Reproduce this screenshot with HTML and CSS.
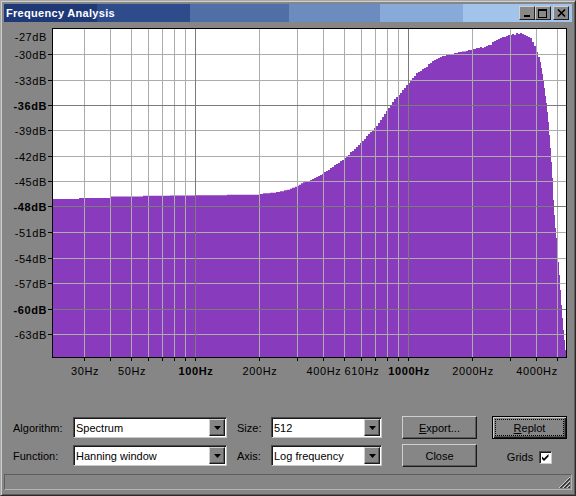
FILE: index.html
```html
<!DOCTYPE html>
<html lang="en">
<head>
  <meta charset="UTF-8" />
  <title>Frequency Analysis</title>
  <link rel="stylesheet" href="styles.css">
</head>
<body>
  <div class="window">
    <!-- Barra de título -->
    <div class="titlebar">
      <span class="title">Frequency Analysis</span>
      <div class="caption-buttons">
        <span class="cap-btn"><svg width="14" height="12" viewBox="0 0 14 12"><rect x="4" y="8" width="6" height="2" fill="#000"/></svg></span>
        <span class="cap-btn"><svg width="14" height="12" viewBox="0 0 14 12"><path d="M2 2h9v9H2zM3 4h7v6H3z" fill="#000" fill-rule="evenodd"/></svg></span>
        <span class="cap-btn cap-close"><svg width="14" height="12" viewBox="0 0 14 12"><path d="M4 2.5L11 9.5M11 2.5L4 9.5" stroke="#000" stroke-width="1.7"/></svg></span>
      </div>
    </div>

    <!-- Gráfico del espectro -->
    <svg class="plot" width="568" height="394" viewBox="4 22 568 394">
      <rect x="52" y="28" width="515" height="330" fill="#fff"/>
      <path class="spectrum" d="M53,357 V199 H79 V198 H110 V196.5 H143 V195.7 H170 V195.4 H195 V195.3 H227 V194.7 H259 V194 H263 V193.3 H270 V192.7 H276 V192 H280 V191.3 H284 V190.3 H287 V189.7 H290 V188.7 H292 V187.7 H295 V186.7 H297 V185.7 H299 V184.7 H301 V183.3 H303 V182.3 H305 V181.3 H307 V181 H310 V180 H312 V179 H314 V178 H316 V177 H318 V176 H320 V175 H322 V174 H324 V172 H326 V171 H328 V170 H330 V168 H332 V167 H334 V165 H336 V164 H338 V163 H340 V161 H342 V160 H344 V158 H346 V156 H348 V155 H350 V152 H352 V151 H354 V149 H356 V147 H358 V145 H360 V143 H362 V141 H364 V139 H366 V136 H368 V134 H370 V132 H372 V130 H374 V128 H376 V126 H378 V123 H380 V120 H382 V117 H384 V114 H386 V111 H388 V108 H390 V105 H392 V102 H394 V99 H396 V97 H398 V95 H400 V93 H402 V90 H404 V88 H406 V85 H408 V83 H410 V80 H412 V78 H414 V76 H416 V73 H418 V72 H420 V71 H422 V69 H424 V68 H426 V67 H428 V64 H430 V63 H432 V61 H434 V60 H436 V59 H438 V58 H440 V57 H442 V56 H446 V55 H452 V54 H454 V53 H458 V52 H462 V51.5 H466 V51 H468 V50 H472 V49 H476 V48 H480 V47 H482 V48 H484 V47 H486 V46 H488 V45 H492 V42 H494 V41 H496 V40 H498 V39 H500 V38 H502 V37 H506 V36 H508 V35 H512 V34 H514 V35 H516 V33 H518 V34 H520 V33 H522 V34 H524 V35 H526 V36 H528 V37 H530 V38 H532 V42 H534 V46 H536 V52 H538 V57 H540 V62 H541 V68 H542 V74 H543 V80 H544 V88 H545 V96 H546 V103 H547 V112 H548 V122 H549 V135 H550 V148 H551 V162 H552 V178 H553 V200 H554 V215 H555 V228 H556 V238 H557 V250 H558 V262 H559 V275 H560 V290 H561 V305 H562 V318 H563 V330 H564 V340 H565 V350 H566 V357 Z"/>
      <path class="grid" d="M84.5 29V357M110.5 29V357M131.5 29V357M148.5 29V357M162.5 29V357M174.5 29V357M185.5 29V357M259.5 29V357M297.5 29V357M323.5 29V357M344.5 29V357M361.5 29V357M375.5 29V357M387.5 29V357M398.5 29V357M472.5 29V357M510.5 29V357M536.5 29V357M557.5 29V357M53 54.5H566M53 80.5H566M53 130.5H566M53 156.5H566M53 181.5H566M53 232.5H566M53 258.5H566M53 283.5H566M53 334.5H566"/>
      <path class="grid-major" d="M195.5 29V357M408.5 29V357M53 105.5H566M53 206.5H566M53 309.5H566"/>
      <path class="frame" d="M52.5 28V358M52 28.5H567M566.5 28V357M52 357.5H567"/>
      <path class="frame" d="M48 54.5H52M48 80.5H52M48 105.5H52M48 130.5H52M48 156.5H52M48 181.5H52M48 206.5H52M48 232.5H52M48 258.5H52M48 283.5H52M48 309.5H52M48 334.5H52"/>
      <path class="frame" d="M84.5 358V361M110.5 358V361M131.5 358V361M148.5 358V361M162.5 358V361M174.5 358V361M185.5 358V361M195.5 358V361M259.5 358V361M297.5 358V361M323.5 358V361M344.5 358V361M361.5 358V361M375.5 358V361M387.5 358V361M398.5 358V361M408.5 358V361M472.5 358V361M510.5 358V361M536.5 358V361M557.5 358V361"/>

      <g class="axis-label" text-anchor="end">
        <text x="47" y="41">-27dB</text>
        <text x="47" y="59">-30dB</text>
        <text x="47" y="85">-33dB</text>
        <text x="47" y="110" class="major">-36dB</text>
        <text x="47" y="135">-39dB</text>
        <text x="47" y="161">-42dB</text>
        <text x="47" y="186">-45dB</text>
        <text x="47" y="211" class="major">-48dB</text>
        <text x="47" y="237">-51dB</text>
        <text x="47" y="263">-54dB</text>
        <text x="47" y="288">-57dB</text>
        <text x="47" y="314" class="major">-60dB</text>
        <text x="47" y="339">-63dB</text>
      </g>
      <g class="axis-label" text-anchor="middle">
        <text x="85" y="375">30Hz</text>
        <text x="132" y="375">50Hz</text>
        <text x="196" y="375" class="major">100Hz</text>
        <text x="260" y="375">200Hz</text>
        <text x="324" y="375">400Hz</text>
        <text x="362" y="375">610Hz</text>
        <text x="409" y="375" class="major">1000Hz</text>
        <text x="473" y="375">2000Hz</text>
        <text x="537" y="375">4000Hz</text>
      </g>
    </svg>

    <!-- Controles -->
    <div class="controls">
      <span class="lbl">Algorithm:</span>
      <div class="combo">
        <span class="combo-text">Spectrum</span>
        <span class="combo-arrow"><svg width="7" height="4" viewBox="0 0 7 4"><path d="M0 0h7L3.5 4z" fill="#000"/></svg></span>
      </div>
      <span class="lbl lbl-2">Size:</span>
      <div class="combo">
        <span class="combo-text">512</span>
        <span class="combo-arrow"><svg width="7" height="4" viewBox="0 0 7 4"><path d="M0 0h7L3.5 4z" fill="#000"/></svg></span>
      </div>
      <button class="btn"><u>E</u>xport...</button>
      <button class="btn btn-default"><span class="focus"><u>R</u>eplot</span></button>

      <span class="lbl">Function:</span>
      <div class="combo">
        <span class="combo-text">Hanning window</span>
        <span class="combo-arrow"><svg width="7" height="4" viewBox="0 0 7 4"><path d="M0 0h7L3.5 4z" fill="#000"/></svg></span>
      </div>
      <span class="lbl lbl-2">Axis:</span>
      <div class="combo">
        <span class="combo-text">Log frequency</span>
        <span class="combo-arrow"><svg width="7" height="4" viewBox="0 0 7 4"><path d="M0 0h7L3.5 4z" fill="#000"/></svg></span>
      </div>
      <button class="btn">Close</button>
      <div class="grids">
        <span>Grids</span>
        <span class="check"><svg width="11" height="11" viewBox="0 0 11 11"><path d="M2 4.5L4 6.5L8.5 2V4.5L4 9L2 7Z" fill="#000"/></svg></span>
      </div>
    </div>

    <!-- Barra de estado -->
    <div class="statusbar">
      <svg class="grip" width="13" height="13" viewBox="0 0 13 13">
        <path d="M12 1L1 12M12 5L5 12M12 9L9 12" stroke="#cfcfcf" stroke-width="1"/>
        <path d="M12 2L2 12M12 3L3 12M12 6L6 12M12 7L7 12M12 10L10 12M12 11L11 12" stroke="#3a3a3a" stroke-width="1"/>
      </svg>
    </div>
  </div>
</body>
</html>
```

FILE: styles.css
```css
html, body {
  margin: 0;
  padding: 0;
  background: #868686;
}
/* Ventana */
.window {
  width: 576px;
  height: 496px;
  box-sizing: border-box;
  display: flex;
  flex-direction: column;
  background: #868686;
  border: 1px solid;
  border-color: #a8a8a8 #2a2a2a #2a2a2a #a8a8a8;
  box-shadow: inset 1px 1px 0 #cfcfcf, inset -1px -1px 0 #5c5c5c;
  padding: 3px 3px 5px;
  font-family: "Liberation Sans", Arial, sans-serif;
  font-size: 11px;
  color: #000;
}
/* Barra de título */
.titlebar {
  height: 18px;
  flex: none;
  display: flex;
  align-items: center;
  justify-content: space-between;
  padding: 0 3px 0 2px;
  background: linear-gradient(to right,
    #1e3878 0 93px, #2e4c8c 93px 186px, #4f6fa6 186px 285px,
    #6c8cc0 285px 376px, #88aad8 376px 459px, #a2c4ea 459px);
}
.title {
  color: #fff;
  font-weight: bold;
  letter-spacing: 0.3px;
  line-height: 18px;
}
.caption-buttons {
  display: flex;
}
.cap-btn {
  width: 16px;
  height: 14px;
  box-sizing: border-box;
  display: flex;
  background: #888;
  border: 1px solid;
  border-color: #d0d0d0 #202020 #202020 #d0d0d0;
}
.cap-close {
  margin-left: 2px;
}
/* Gráfico */
.plot {
  display: block;
  flex: none;
}
.spectrum {
  fill: #893bbe;
}
.grid {
  fill: none;
  stroke: #acacac;
  stroke-width: 1;
}
.grid-major {
  fill: none;
  stroke: #7b7b7b;
  stroke-width: 1;
}
.frame {
  fill: none;
  stroke: #000;
  stroke-width: 1;
}
.axis-label {
  font-family: "Liberation Sans", Arial, sans-serif;
  font-size: 11px;
  letter-spacing: 0.6px;
  fill: #000;
}
.axis-label .major {
  font-weight: bold;
}
/* Controles */
.controls {
  flex: none;
  display: grid;
  grid-template-columns: 60px 154px 44px 111px 95px 90px;
  grid-template-rows: 23px 23px;
  row-gap: 5px;
  align-items: center;
  padding-left: 9px;
}
.lbl-2 {
  padding-left: 10px;
}
.combo {
  height: 21px;
  box-sizing: border-box;
  display: flex;
  align-items: center;
  background: #fff;
  border: 1px solid;
  border-color: #4a4a4a #c8c8c8 #c8c8c8 #4a4a4a;
  box-shadow: inset 1px 1px 0 #1a1a1a;
  padding-left: 2px;
}
.combo-text {
  flex: 1;
  white-space: nowrap;
}
.combo-arrow {
  width: 16px;
  height: 17px;
  box-sizing: border-box;
  margin-right: 1px;
  display: flex;
  align-items: center;
  justify-content: center;
  background: #868686;
  border: 1px solid;
  border-color: #cfcfcf #1a1a1a #1a1a1a #cfcfcf;
  box-shadow: inset -1px -1px 0 #5a5a5a;
}
.btn {
  justify-self: end;
  width: 75px;
  height: 23px;
  box-sizing: border-box;
  padding: 0;
  background: #868686;
  border: 1px solid;
  border-color: #cfcfcf #1a1a1a #1a1a1a #cfcfcf;
  box-shadow: inset -1px -1px 0 #5a5a5a;
  font-family: "Liberation Sans", Arial, sans-serif;
  font-size: 11px;
  color: #000;
}
.btn-default {
  border-color: #000;
  padding: 2px;
  box-shadow: inset 1px 1px 0 #cfcfcf, inset -1px -1px 0 #1a1a1a, inset -2px -2px 0 #5a5a5a;
}
.focus {
  display: flex;
  height: 100%;
  box-sizing: border-box;
  align-items: center;
  justify-content: center;
  border: 1px dotted #000;
}
.grids {
  justify-self: end;
  width: 75px;
  display: flex;
  justify-content: center;
  align-items: center;
  gap: 6px;
  padding-top: 3px;
}
.check {
  width: 13px;
  height: 13px;
  box-sizing: border-box;
  display: flex;
  background: #fff;
  border: 1px solid;
  border-color: #4a4a4a #c8c8c8 #c8c8c8 #4a4a4a;
  box-shadow: inset 1px 1px 0 #1a1a1a;
}
/* Barra de estado */
.statusbar {
  position: relative;
  flex: none;
  height: 16px;
  margin-top: 7px;
  box-sizing: border-box;
  border: 1px solid;
  border-color: #5e5e5e #b4b4b4 #b4b4b4 #5e5e5e;
}
.grip {
  position: absolute;
  right: 0;
  bottom: 0;
}
```
